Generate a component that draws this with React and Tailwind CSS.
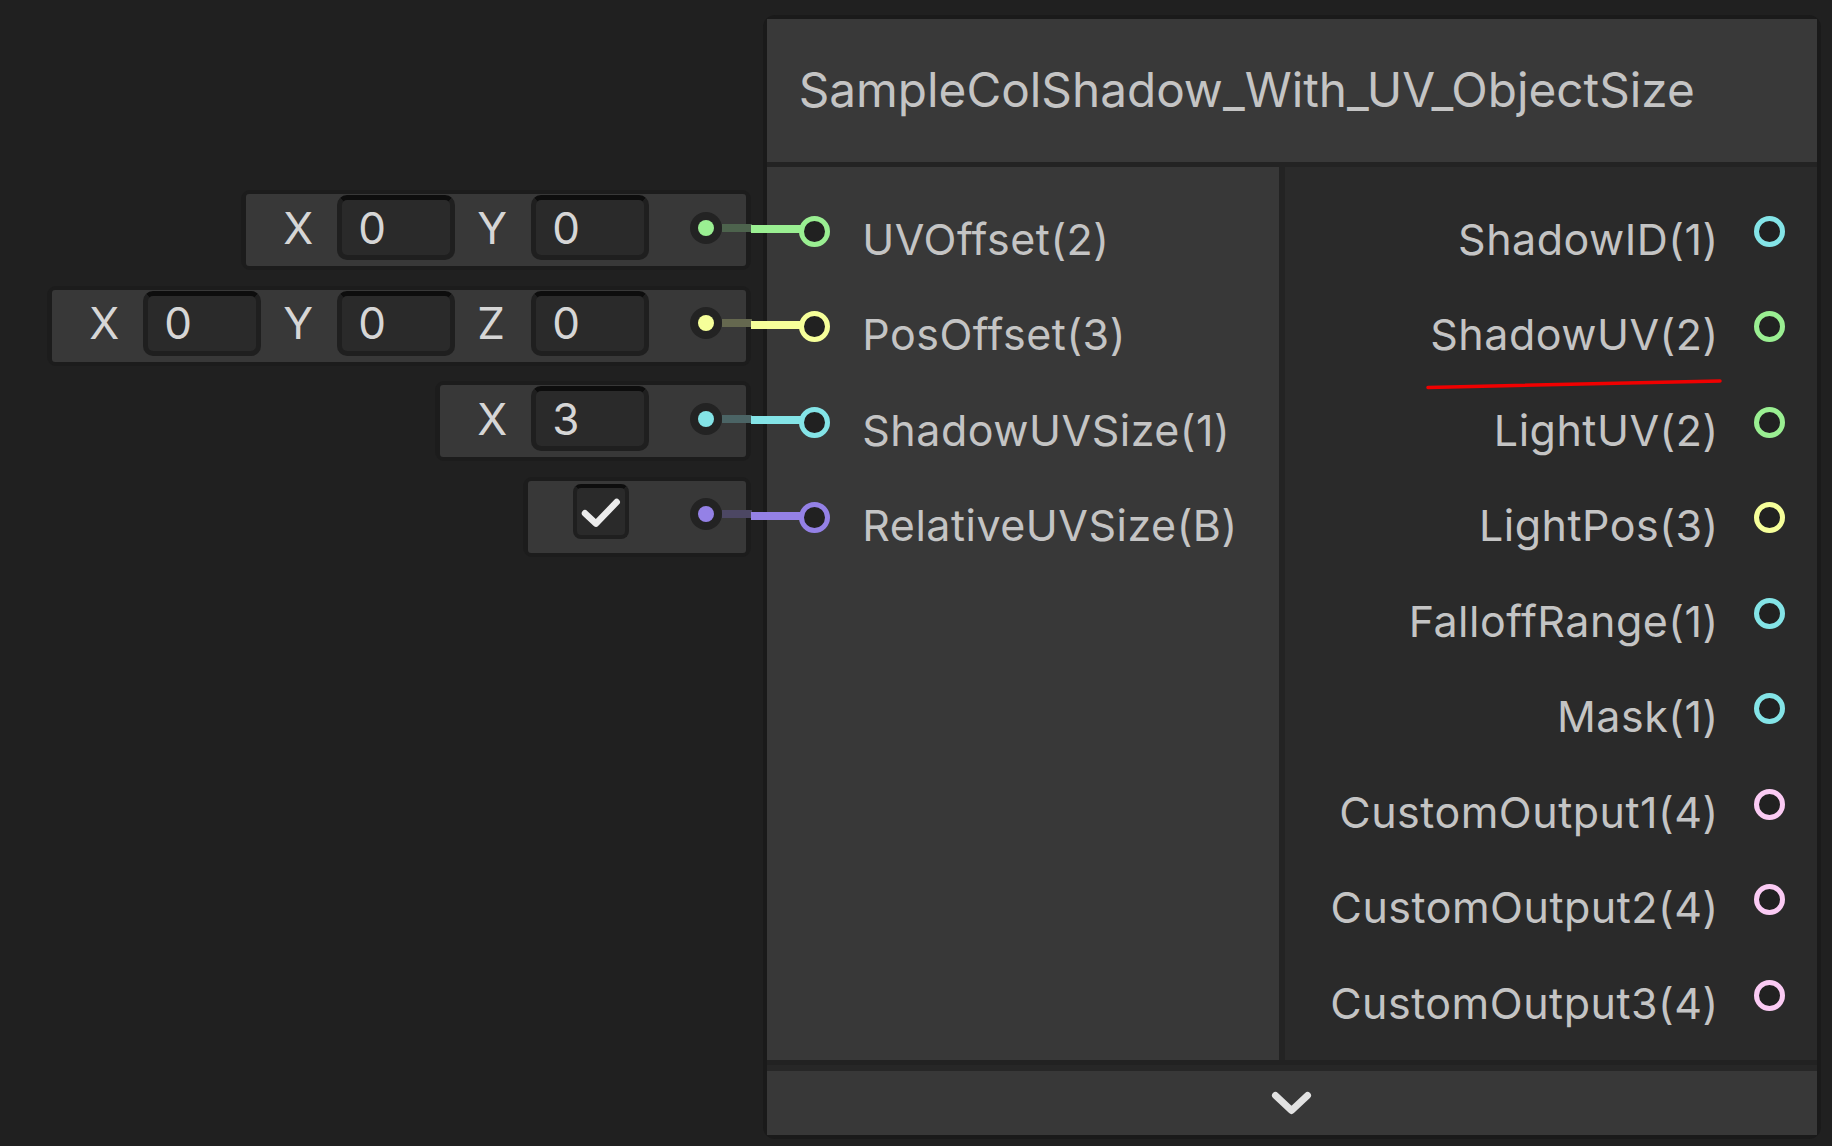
import React from "react";

const GREEN = {
  ring: "border-[#9aef92]",
  dot: "bg-[#9aef92]",
  line: "bg-[#9aef92]",
  dim: "bg-[#4d634d]",
};
const YELLOW = {
  ring: "border-[#f6ff9a]",
  dot: "bg-[#f6ff9a]",
  line: "bg-[#f6ff9a]",
  dim: "bg-[#65684f]",
};
const CYAN = {
  ring: "border-[#84e4e7]",
  dot: "bg-[#84e4e7]",
  line: "bg-[#84e4e7]",
  dim: "bg-[#4b6465]",
};
const PURPLE = {
  ring: "border-[#9481e6]",
  dot: "bg-[#9481e6]",
  line: "bg-[#9481e6]",
  dim: "bg-[#4c4763]",
};
const PINK = {
  ring: "border-[#fbcbf4]",
  dot: "bg-[#fbcbf4]",
  line: "bg-[#fbcbf4]",
  dim: "bg-[#66575f]",
};

const inlineRows = [
  { fields: [["X", "0"], ["Y", "0"]], c: GREEN },
  { fields: [["X", "0"], ["Y", "0"], ["Z", "0"]], c: YELLOW },
  { fields: [["X", "3"]], c: CYAN },
  { checkbox: true, c: PURPLE },
];

const inputs = [
  { name: "UVOffset(2)", c: GREEN },
  { name: "PosOffset(3)", c: YELLOW },
  { name: "ShadowUVSize(1)", c: CYAN },
  { name: "RelativeUVSize(B)", c: PURPLE },
];

const outputs = [
  { name: "ShadowID(1)", c: CYAN },
  { name: "ShadowUV(2)", c: GREEN },
  { name: "LightUV(2)", c: GREEN },
  { name: "LightPos(3)", c: YELLOW },
  { name: "FalloffRange(1)", c: CYAN },
  { name: "Mask(1)", c: CYAN },
  { name: "CustomOutput1(4)", c: PINK },
  { name: "CustomOutput2(4)", c: PINK },
  { name: "CustomOutput3(4)", c: PINK },
];

function Field({ value }) {
  return (
    <div className="w-[118px] h-[65px] shrink-0 rounded-[10px] border-[5px] border-[#1f1f1f] border-t-[#0d0d0d] bg-[#2a2a2a] flex items-center pl-[16px] text-[44px] leading-none text-[#d6d6d6]">
      {value}
    </div>
  );
}

function Checkbox() {
  return (
    <div className="w-[56px] h-[55px] shrink-0 mb-[5px] rounded-[8px] border-[4px] border-[#1f1f1f] border-t-[#0d0d0d] bg-[#2a2a2a] flex items-center justify-center">
      <svg width="40" height="30" viewBox="0 0 40 30" className="mt-[2px]">
        <polyline
          points="4,15.3 15,25.6 35.7,4"
          fill="none"
          stroke="#ececec"
          strokeWidth="6.5"
          strokeLinecap="round"
          strokeLinejoin="round"
        />
      </svg>
    </div>
  );
}

function InlineRow({ row }) {
  return (
    <div className="h-[80px] rounded-[9px] bg-[#1c1c1c] px-[5px] py-[4px] flex">
      <div className="flex items-center bg-[#383838] rounded-[3px] pl-[15px] pr-[24px] pt-[1px] pb-[6px]">
        {row.checkbox ? (
          <div className="flex items-center pl-[30px] pr-[20px]">
            <Checkbox />
          </div>
        ) : (
          row.fields.map(([l, v], i) => (
            <div key={i} className="flex items-center">
              <span className="w-[76px] pl-[22px] text-[44px] leading-none text-[#d6d6d6]">
                {l}
              </span>
              <Field value={v} />
            </div>
          ))
        )}
        <div className="ml-[40.7px] w-[32px] h-[32px] shrink-0 rounded-full bg-[#232323] flex items-center justify-center relative">
          <div className={`w-[16px] h-[16px] rounded-full ${row.c.dot}`} />
          <div
            className={`absolute left-full top-[12px] w-[30px] h-[8px] ${row.c.dim}`}
          />
        </div>
      </div>
    </div>
  );
}

function Ring({ c, withLine }) {
  return (
    <div
      className={`relative w-[31px] h-[31px] shrink-0 rounded-full border-[5px] bg-[#212121] ${c.ring}`}
    >
      {withLine && (
        <div
          className={`absolute right-full top-[4.5px] w-[53px] h-[8px] ${c.line}`}
        />
      )}
    </div>
  );
}

export default function App() {
  return (
    <div className="relative w-[1832px] h-[1146px] overflow-hidden bg-[#202020] flex items-start font-['Inter','Noto_Sans',sans-serif]">
      {/* inline input fields */}
      <div className="w-[751px] shrink-0 flex flex-col items-end pt-[190px] gap-[15.5px]">
        {inlineRows.map((r, i) => (
          <InlineRow key={i} row={r} />
        ))}
      </div>

      {/* node */}
      <div className="ml-[11.7px] mt-[15px] w-[1058px] shrink-0 rounded-[12px] border-[4px] border-[#1a1a1a] flex flex-col">
        <div className="h-[143.3px] bg-[#393939] flex items-center pl-[32px] text-[47.7px] leading-none text-[#c4c4c4] whitespace-nowrap">
          SampleColShadow_With_UV_ObjectSize
        </div>
        <div className="h-[5.2px] bg-[#232323]" />
        <div className="h-[892.5px] flex">
          <div className="w-[512.6px] shrink-0 bg-[#383838] pt-[16.25px] flex flex-col">
            {inputs.map((p, i) => (
              <div key={i} className="h-[95.5px] flex items-center pl-[32.6px]">
                <Ring c={p.c} withLine />
                <span className="ml-[32px] mt-[16px] text-[43px] tracking-[0.5px] leading-none text-[#c4c4c4] whitespace-nowrap">
                  {p.name}
                </span>
              </div>
            ))}
          </div>
          <div className="w-[5.7px] shrink-0 bg-[#232323]" />
          <div className="flex-1 bg-[#2a2a2a] pt-[16.25px] flex flex-col">
            {outputs.map((p, i) => (
              <div
                key={i}
                className="h-[95.5px] flex items-center justify-end pr-[32px]"
              >
                <span className="mr-[35px] mt-[16px] text-[43px] tracking-[0.5px] leading-none text-[#c4c4c4] whitespace-nowrap">
                  {p.name}
                </span>
                <Ring c={p.c} />
              </div>
            ))}
          </div>
        </div>
        <div className="h-[5px] bg-[#222222]" />
        <div className="h-[5.7px] bg-[#272727]" />
        <div className="h-[64.3px] bg-[#383838] flex items-center justify-center">
          <svg width="41" height="24" viewBox="0 0 41 24">
            <polyline
              points="4.5,4.5 20.5,19.5 36.5,4.5"
              fill="none"
              stroke="#e2e2e2"
              strokeWidth="7"
              strokeLinecap="round"
              strokeLinejoin="round"
            />
          </svg>
        </div>
      </div>

      {/* red annotation stroke */}
      <svg
        className="absolute left-0 top-0 pointer-events-none"
        width="1832"
        height="1146"
      >
        <line
          x1="1428"
          y1="387.5"
          x2="1720"
          y2="381"
          stroke="#f00000"
          strokeWidth="3.5"
          strokeLinecap="round"
        />
      </svg>
    </div>
  );
}
